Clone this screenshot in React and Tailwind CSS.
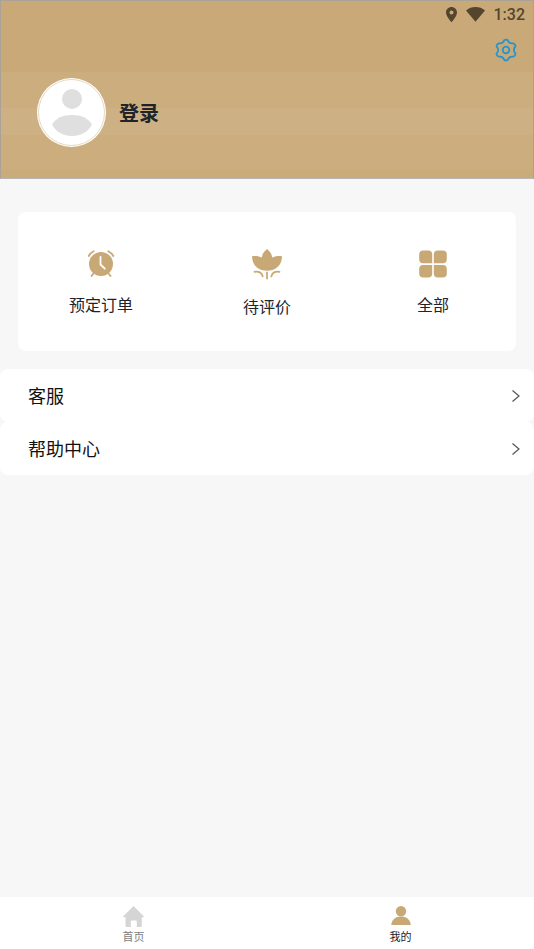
import React from "react";

function StatusBar() {
  return (
    <div className="flex h-7 items-center justify-end pr-2 text-[#54452f]">
      <svg className="mr-2 h-4 w-3" viewBox="0 0 12 16" fill="currentColor" aria-hidden="true">
        <path
          fillRule="evenodd"
          d="M5.500 0C2.500 0 0 2.400 0 5.500c0 4 5.500 9.700 5.500 9.700S11 9.500 11 5.500C11 2.400 8.500 0 5.500 0Zm0 3.500a2 2 0 1 1 0 4 2 2 0 0 1 0-4Z"
        />
      </svg>
      <svg className="mr-2 h-4 w-5" viewBox="0 0 20 16" fill="currentColor" aria-hidden="true">
        <path d="M0 3.400C2.600 1.100 5.900 0 9.500 0s6.900 1.100 9.500 3.400L9.500 14.700Z" />
      </svg>
      <span className="font-['Roboto',sans-serif] text-base font-medium leading-4">1:32</span>
    </div>
  );
}

function GearIcon() {
  return (
    <svg className="block h-6 w-6" viewBox="0 0 24 24" fill="none" stroke="#2494cc" strokeWidth="1.800" aria-hidden="true">
      <path
        strokeLinejoin="round"
        d="M10.200 2.300Q12 .9 13.800 2.300C14.800 5 16.400 5.900 19.300 5.300Q21.400 6 21.500 8.300C19.400 10.400 19.400 13.600 21.500 15.700Q21.400 18 19.300 18.700C16.400 18.100 14.800 19 13.800 21.700Q12 23.100 10.200 21.700C9.200 19 7.600 18.100 4.700 18.700Q2.600 18 2.500 15.700C4.600 13.600 4.600 10.400 2.500 8.300Q2.600 6 4.700 5.300C7.600 5.900 9.200 5 10.200 2.300Z"
      />
      <circle cx="12" cy="12" r="3.300" />
    </svg>
  );
}

function ClockIcon() {
  return (
    <svg className="h-8 w-8" viewBox="0 0 32 32" fill="none" aria-hidden="true">
      <circle cx="16" cy="16" r="12" fill="#c8a976" />
      <g stroke="#c8a976" strokeWidth="1.800" strokeLinecap="round">
        <path d="M3.700 8C4.800 6 6.500 4.400 8.700 3.300M23.300 3.300c2.200 1.100 3.900 2.700 5 4.700M8.500 25.500l-2 2.500M23.500 25.500l2 2.500" />
      </g>
      <path d="M15.500 9v7.500l4.300 4.200" stroke="#fff" strokeWidth="1.800" strokeLinecap="round" strokeLinejoin="round" />
    </svg>
  );
}

function FlowerIcon() {
  return (
    <svg className="h-8 w-8" viewBox="0 0 32 32" fill="none" aria-hidden="true">
      <path
        d="M16 1c2.600 2 4.600 4.600 5.300 8.500C23.800 8 27.500 7.500 31 8.300 31 17 25 22.800 16 22.800S1 17 1 8.300c3.500-.8 7.200-.3 9.700 1.200C11.400 5.600 13.400 3 16 1Z"
        fill="#c8a976"
      />
      <path
        d="M16 24.500v6M3.500 23.800c4.500-.6 7.200 1 8.200 4.600M28.500 23.800c-4.500-.6-7.200 1-8.200 4.600"
        stroke="#c8a976"
        strokeWidth="1.800"
        strokeLinecap="round"
      />
    </svg>
  );
}

function GridIcon() {
  return (
    <svg className="h-8 w-8" viewBox="0 0 32 32" fill="#c8a976" aria-hidden="true">
      <path d="M6.200 2.500h5a4 4 0 0 1 4 4v8.700h-9a4 4 0 0 1-4-4V6.500a4 4 0 0 1 4-4Z" />
      <path d="M20.800 2.500h5a4 4 0 0 1 4 4v4.700a4 4 0 0 1-4 4h-9V6.500a4 4 0 0 1 4-4Z" />
      <path d="M6.200 17h9v8.500a4 4 0 0 1-4 4h-5a4 4 0 0 1-4-4V21a4 4 0 0 1 4-4Z" />
      <path d="M16.800 17h9a4 4 0 0 1 4 4v4.500a4 4 0 0 1-4 4h-5a4 4 0 0 1-4-4Z" />
    </svg>
  );
}

function MenuRow({ label }) {
  return (
    <button type="button" className="flex w-full items-center justify-between rounded-lg bg-white py-3 pl-7 pr-3">
      <span className="text-lg leading-[29px] text-[#111]">{label}</span>
      <svg className="h-4 w-3" viewBox="0 0 12 16" fill="none" aria-hidden="true">
        <path d="M2.500 2.500 9 8l-6.500 5.500" stroke="#555" strokeWidth="1.200" />
      </svg>
    </button>
  );
}

const orders = [
  { label: "预定订单", icon: <ClockIcon />, gap: "gap-3" },
  { label: "待评价", icon: <FlowerIcon />, gap: "gap-3.5" },
  { label: "全部", icon: <GridIcon />, gap: "gap-3" },
];

export default function App() {
  return (
    <div className="flex min-h-screen flex-col bg-[#f7f7f7] font-['Noto_Sans_CJK_SC',sans-serif] text-[#212329]">
      <header className="border border-[#a9a397] border-b-[#b9b7b3] bg-[linear-gradient(#c9a978_0,#c9a978_71px,#cbad7e_71px,#cbad7e_107px,#cdb083_107px,#cdb083_134px,#ccae7e_134px,#ccae7e_169px,#caab7a_169px)]">
        <StatusBar />
        <div className="flex justify-end pr-[15px] pt-[9px]">
          <button type="button" aria-label="设置">
            <GearIcon />
          </button>
        </div>
        <div className="flex items-center gap-3 pb-[30px] pl-9 pt-4">
          <svg className="h-[70px] w-[70px]" viewBox="0 0 70 70" aria-hidden="true">
            <circle cx="34.500" cy="34.500" r="34.500" fill="#fff" />
            <circle cx="34.500" cy="34.500" r="33" fill="none" stroke="#dbc8a8" strokeWidth=".7" />
            <circle cx="35" cy="21" r="10" fill="#dfdfdf" />
            <path d="M15 46.500C19 40 26 37 35 37s16 3 20 9.500c-4 7.500-11 11.500-20 11.500s-16-4-20-11.500Z" fill="#dfdfdf" />
          </svg>
          <button type="button" className="text-xl font-bold leading-7">登录</button>
        </div>
      </header>

      <main className="flex-1 pt-[33px]">
        <section className="mx-[18px] mb-[18px] grid h-[139px] grid-cols-3 rounded-lg bg-white pt-9">
          {orders.map((item) => (
            <button key={item.label} type="button" className={`flex flex-col items-center ${item.gap}`}>
              {item.icon}
              <span className="text-base leading-6">{item.label}</span>
            </button>
          ))}
        </section>
        <MenuRow label="客服" />
        <MenuRow label="帮助中心" />
      </main>

      <nav className="grid h-[52px] grid-cols-2 bg-white text-[11px] leading-[14px]">
        <a href="#home" className="flex flex-col items-center pt-2 text-[#7d7d7d]">
          <svg className="h-6 w-6" viewBox="0 0 24 24" fill="#d5d5d5" aria-hidden="true">
            <path d="M11.500 1 22 11.500 21.500 12.300H19.800V21a1 1 0 0 1-1 1h-4v-5.500a1 1 0 0 0-1-1h-4a1 1 0 0 0-1 1V22H4.500a1 1 0 0 1-1-1v-8.700H1.500L1 11.500Z" />
          </svg>
          首页
        </a>
        <a href="#mine" aria-current="page" className="flex flex-col items-center pt-2">
          <svg className="h-6 w-6" viewBox="0 0 24 24" fill="#c8a976" aria-hidden="true">
            <circle cx="12" cy="6.300" r="5.200" />
            <path d="M2.300 20C2.600 14.500 6.500 11.500 12 11.500s9.400 3 9.700 8.500Z" />
          </svg>
          我的
        </a>
      </nav>
    </div>
  );
}
